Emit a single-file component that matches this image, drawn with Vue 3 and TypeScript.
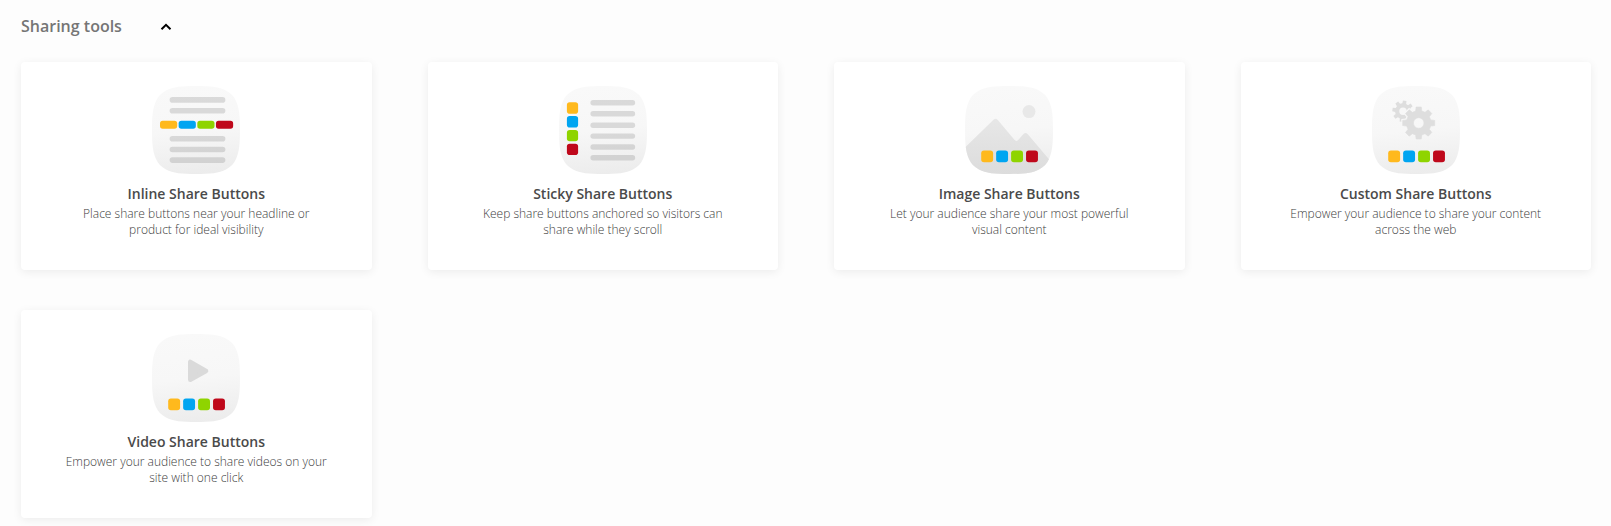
<script setup lang="ts">
import { ref } from 'vue'

type Kind = 'inline' | 'sticky' | 'image' | 'custom' | 'video'

interface Tool {
  kind: Kind
  title: string
  description: string
}

const open = ref(true)

const tools: Tool[] = [
  { kind: 'inline', title: 'Inline Share Buttons', description: 'Place share buttons near your headline or product for ideal visibility' },
  { kind: 'sticky', title: 'Sticky Share Buttons', description: 'Keep share buttons anchored so visitors can share while they scroll' },
  { kind: 'image', title: 'Image Share Buttons', description: 'Let your audience share your most powerful visual content' },
  { kind: 'custom', title: 'Custom Share Buttons', description: 'Empower your audience to share your content across the web' },
  { kind: 'video', title: 'Video Share Buttons', description: 'Empower your audience to share videos on your site with one click' },
]

const colors = ['#ffb91d', '#00a5f1', '#8fd400', '#bf081b']
const inlineBars = [11.1, 21.9, 50, 60.7, 71.3]
const stickyBars = [14.1, 25, 36.6, 47.4, 58.3, 69]
const squircle =
  'M44 0C58 0 67 .7 74 4.5C79 7.2 82 10.5 84 15C87.3 22 88 31 88 44C88 57 87.3 66 84 73C82 77.5 79 80.8 74 83.5C67 87.3 58 88 44 88C30 88 21 87.3 14 83.5C9 80.8 6 77.5 4 73C.7 66 0 57 0 44C0 31 .7 22 4 15C6 10.5 9 7.2 14 4.5C21 .7 30 0 44 0Z'

// Outline of an eight-toothed gear with a round hole.
function gear(cx: number, cy: number, outer: number, inner: number, hole: number, turn = 0): string {
  const points: string[] = []
  for (let i = 0; i < 8; i++) {
    const mid = (i * Math.PI) / 4 + turn
    const corners: [number, number][] = [[inner, -0.25], [outer, -0.16], [outer, 0.16], [inner, 0.25]]
    for (const [r, a] of corners) {
      points.push(`${(cx + r * Math.cos(mid + a)).toFixed(2)} ${(cy + r * Math.sin(mid + a)).toFixed(2)}`)
    }
  }
  return `M${points.join('L')}ZM${cx - hole} ${cy}a${hole} ${hole} 0 1 0 ${hole * 2} 0a${hole} ${hole} 0 1 0 ${-hole * 2} 0Z`
}

const largeGear = gear(46.7, 37, 16.2, 12.4, 5.3)
const smallGear = gear(31, 25.2, 10.8, 7.9, 3.7, 0.16)
const gapOutline = gear(46.7, 37, 16.2, 12.4, 0.1)
</script>

<template>
  <main class="page">
    <header class="heading">
      <h2>Sharing tools</h2>
      <button class="toggle" type="button" aria-label="Toggle sharing tools" @click="open = !open">
        <svg width="12" height="8" viewBox="0 0 12 8" :class="{ closed: !open }">
          <path d="M1.5 6.2L6 1.9L10.5 6.2" fill="none" stroke="#000" stroke-width="2" />
        </svg>
      </button>
    </header>

    <section v-if="open" class="grid">
      <article v-for="tool in tools" :key="tool.kind" class="card">
        <svg class="icon" width="88" height="88" viewBox="0 0 88 88">
          <defs>
            <linearGradient :id="`bg-${tool.kind}`" x1="0.45" y1="0" x2="0.55" y2="1">
              <stop offset="0" stop-color="#f9f9f9" />
              <stop offset="0.5" stop-color="#f7f7f7" />
              <stop offset="1" stop-color="#ececec" />
            </linearGradient>
            <linearGradient id="hill" x1="0" y1="0" x2="0" y2="1">
              <stop offset="0" stop-color="#e7e7e7" />
              <stop offset="1" stop-color="#dcdcdc" />
            </linearGradient>
            <clipPath :id="`clip-${tool.kind}`"><path :d="squircle" /></clipPath>
            <mask id="gear-gap" maskUnits="userSpaceOnUse" x="0" y="0" width="88" height="88">
              <rect width="88" height="88" fill="#fff" />
              <path :d="gapOutline" fill="#000" stroke="#000" stroke-width="3" />
            </mask>
          </defs>
          <path :d="squircle" :fill="`url(#bg-${tool.kind})`" />

          <template v-if="tool.kind === 'inline'">
            <rect v-for="y in inlineBars" :key="y" x="17.6" :y="y" width="55.8" height="5.6" rx="2.8" fill="#000" fill-opacity="0.12" />
            <rect v-for="(color, i) in colors" :key="color" :x="8 + i * 18.65" y="34.7" width="17.2" height="8.1" rx="2.7" :fill="color" />
          </template>

          <template v-else-if="tool.kind === 'sticky'">
            <rect v-for="y in stickyBars" :key="y" x="31.4" :y="y" width="44.8" height="5.4" rx="2.7" fill="#000" fill-opacity="0.12" />
            <rect v-for="(color, i) in colors" :key="color" x="7.9" :y="16.3 + i * 13.8" width="11.2" height="11.4" rx="2.8" :fill="color" />
          </template>

          <template v-else>
            <g v-if="tool.kind === 'image'" :clip-path="`url(#clip-${tool.kind})`">
              <path d="M0 61.5L28.5 33.7Q30.7 31.6 32.8 33.9L49.4 53.8Q51.2 56 53.2 54L58.5 48Q60.5 45.8 62.6 48L88 78V88H0Z" fill="url(#hill)" />
              <circle cx="64" cy="25.6" r="6.5" fill="#e8e8e8" />
            </g>
            <g v-else-if="tool.kind === 'custom'" fill="#dedede" fill-rule="evenodd">
              <path :d="smallGear" mask="url(#gear-gap)" />
              <path :d="largeGear" stroke="#dedede" stroke-width="0.6" stroke-linejoin="round" />
            </g>
            <path v-else d="M38.3 28V45.8L54 36.9Z" fill="#dadada" stroke="#dadada" stroke-width="4.6" stroke-linejoin="round" />
            <rect v-for="(color, i) in colors" :key="color" :x="16.2 + i * 14.95" y="64.4" width="11.9" height="11.9" rx="2.8" :fill="color" />
          </template>
        </svg>
        <h3>{{ tool.title }}</h3>
        <p>{{ tool.description }}</p>
      </article>
    </section>
  </main>
</template>

<style>
body {
  background: #fdfdfd;
  overflow: hidden;
}
</style>

<style scoped>
.page {
  box-sizing: border-box;
  height: 526px;
  padding: 14px 20px 0 21px;
  font-family: 'Open Sans', sans-serif;
}
.heading {
  display: flex;
  align-items: center;
  height: 24px;
  margin-bottom: 24px;
}
h2 {
  width: 139px;
  margin: 0;
  color: #757575;
  font-size: 16px;
  font-weight: 600;
  line-height: 24px;
}
.toggle {
  display: flex;
  margin-top: 2px;
  padding: 0;
  border: 0;
  background: none;
}
.closed {
  transform: rotate(180deg);
}
.grid {
  display: grid;
  grid-template-columns: repeat(4, 1fr);
  gap: 40px 56px;
}
.card {
  display: flex;
  flex-direction: column;
  align-items: center;
  box-sizing: border-box;
  height: 208px;
  padding: 24px 42px 0;
  border-radius: 4px;
  background: #fff;
  box-shadow: 0 2px 10px rgba(0, 0, 0, 0.07);
  text-align: center;
}
.icon {
  flex: none;
}
h3 {
  margin: 10px 0 0;
  color: #4a4a4a;
  font-size: 14px;
  font-weight: 600;
  line-height: 20px;
}
p {
  margin: 2px 0 0;
  color: #3c3c3c;
  font-size: 12px;
  font-weight: 300;
  line-height: 16px;
}
</style>
